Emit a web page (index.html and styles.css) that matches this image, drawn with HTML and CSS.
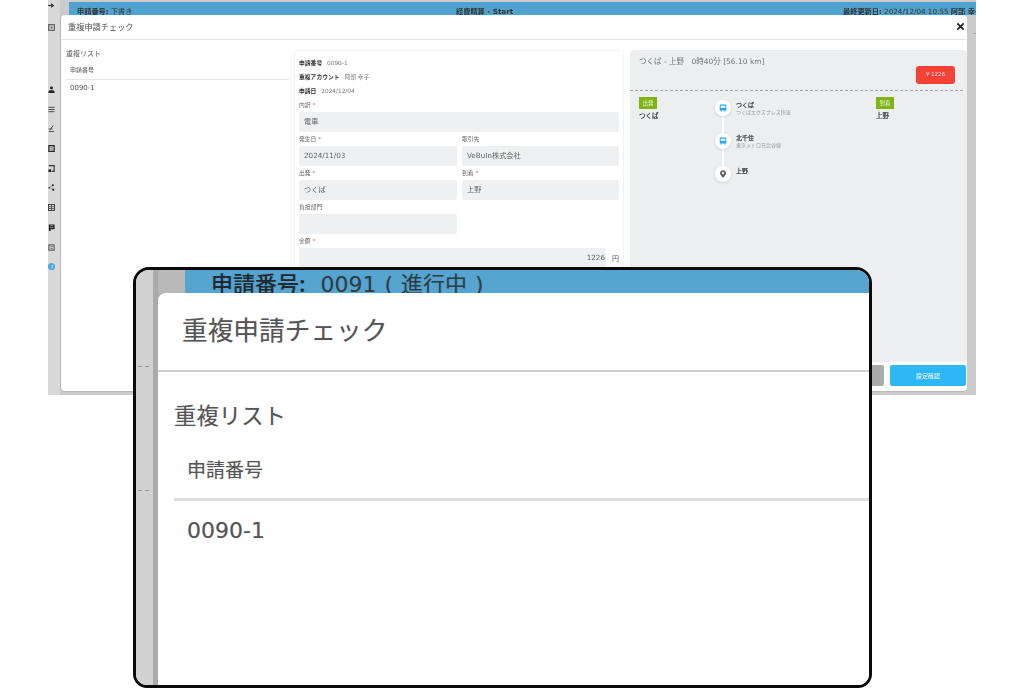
FILE: index.html
```html
<!DOCTYPE html>
<html lang="ja">
<head>
  <meta charset="UTF-8">
  <title>重複申請チェック</title>
  <link rel="stylesheet" href="styles.css">
</head>
<body>
  <div class="app">
    <nav class="rail">
      <div class="rail-top">
        <svg class="rail-icon" viewBox="0 0 8 8"><path d="M0 4h5M3.500 2l2.500 2-2.500 2" fill="none" stroke="#333" stroke-width="1.400"/></svg>
        <svg class="rail-icon" viewBox="0 0 8 8"><rect x="0.800" y="0.800" width="6.400" height="6.400" fill="none" stroke="#555" stroke-width="1.300"/><path d="M3 3h2v2H3z" fill="#555"/></svg>
      </div>
      <div class="rail-list">
        <svg class="rail-icon" viewBox="0 0 8 8"><circle cx="4" cy="2.200" r="1.700" fill="#222"/><path d="M0.500 8V6.500C0.500 5.200 2 4.800 4 4.800S7.500 5.200 7.500 6.500V8z" fill="#222"/></svg>
        <svg class="rail-icon" viewBox="0 0 8 8"><path d="M0.500 1.500h7M0.500 4h7M0.500 6.500h7" stroke="#444" stroke-width="1.100"/></svg>
        <svg class="rail-icon" viewBox="0 0 8 8"><path d="M6 0.500L2 6M1 7.500h6M1 4.500h4" fill="none" stroke="#444" stroke-width="1.100"/></svg>
        <svg class="rail-icon" viewBox="0 0 8 8"><rect x="1" y="0.700" width="6" height="6.600" fill="none" stroke="#222" stroke-width="1.400"/><path d="M2.500 3h3M2.500 5h3" stroke="#555" stroke-width="0.800"/></svg>
        <svg class="rail-icon" viewBox="0 0 8 8"><path d="M1 0.700h6v6.600H4" fill="none" stroke="#333" stroke-width="1.300"/><path d="M0.500 5h3v3h-3z" fill="#222"/></svg>
        <svg class="rail-icon" viewBox="0 0 8 8"><circle cx="5.500" cy="1.500" r="1.200" fill="#222"/><circle cx="1.500" cy="4" r="1" fill="#333"/><circle cx="6" cy="6.500" r="1.300" fill="#222"/><path d="M1.500 4L5.500 1.500M1.500 4L6 6.500" stroke="#555" stroke-width="0.500"/></svg>
        <svg class="rail-icon" viewBox="0 0 8 8"><rect x="0.600" y="0.600" width="6.800" height="6.800" fill="none" stroke="#333" stroke-width="1"/><path d="M0.600 3h6.800M0.600 5.300h6.800M4 0.600v6.800" stroke="#333" stroke-width="0.800"/></svg>
        <svg class="rail-icon" viewBox="0 0 8 8"><path d="M1 0.500h6.500v5.500H3v2H1z" fill="#222"/><path d="M2.500 2h3.500M2.500 4h3.500" stroke="#ccc" stroke-width="0.700"/></svg>
        <svg class="rail-icon" viewBox="0 0 8 8"><rect x="1" y="1" width="6" height="6" fill="none" stroke="#444" stroke-width="1.100"/><path d="M2.500 3h3M2.500 5h3" stroke="#555" stroke-width="0.800"/></svg>
        <svg class="rail-icon" viewBox="0 0 8 8"><circle cx="4" cy="4" r="4" fill="#4aa8dc"/><path d="M3.500 2.500h1.500v3H3.500" fill="none" stroke="#cfe6f3" stroke-width="0.800"/></svg>
      </div>
    </nav>

    <div class="behind">
      <div class="topbar">
        <span class="topbar-left"><b>申請番号:</b> 下書き</span>
        <span class="topbar-title">経費精算 - Start</span>
        <span class="topbar-right"><b>最終更新日:</b> 2024/12/04 10:55 <b>阿部 幸子</b></span>
      </div>
      <div class="behind-side">
        <i class="behind-tick"></i>
        <i class="behind-chip"></i>
        <i class="behind-blue"></i>
        <i class="behind-mark"></i>
        <i class="behind-mark"></i>
        <i class="behind-mark"></i>
        <i class="behind-mark"></i>
        <i class="behind-mark"></i>
      </div>
    </div>

    <section class="modal">
      <header class="modal-head">
        <h2>重複申請チェック</h2>
        <svg class="close" viewBox="0 0 10 10"><path d="M1.500 1.500l7 7M8.500 1.500l-7 7" stroke="#222" stroke-width="1.800"/></svg>
      </header>

      <div class="modal-body">
        <div class="dup-list">
          <h3>重複リスト</h3>
          <div class="dup-th">申請番号</div>
          <div class="dup-td">0090-1</div>
        </div>

        <div class="detail">
          <p class="info"><b>申請番号</b> 0090-1</p>
          <p class="info"><b>重複アカウント</b> 阿部 幸子</p>
          <p class="info"><b>申請日</b> 2024/12/04</p>

          <div class="form-grid">
            <div class="field wide"><label>内訳 <em>*</em></label><div class="value">電車</div></div>
            <div class="field"><label>発生日 <em>*</em></label><div class="value">2024/11/03</div></div>
            <div class="field"><label>取引先</label><div class="value">VeBuIn株式会社</div></div>
            <div class="field"><label>出発 <em>*</em></label><div class="value">つくば</div></div>
            <div class="field"><label>到着 <em>*</em></label><div class="value">上野</div></div>
            <div class="field"><label>負担部門</label><div class="value"></div></div>
            <div class="field-gap"></div>
            <div class="field wide">
              <label>金額 <em>*</em></label>
              <div class="amount"><div class="value">1226</div><span>円</span></div>
            </div>
          </div>
        </div>

        <div class="route">
          <div class="route-head">
            <div class="route-title">つくば - 上野　0時40分 [56.10 km]</div>
            <div class="fare">¥ 1226</div>
          </div>
          <div class="route-body">
            <div class="endpoint">
              <span class="tag">出発</span>
              <strong>つくば</strong>
            </div>
            <div class="stops">
              <div class="stop">
                <span class="stop-dot">
                  <svg viewBox="0 0 8 8"><path d="M1.500 0.500h5A0.800 0.800 0 0 1 7.300 1.300V6.500H0.700V1.300A0.800 0.800 0 0 1 1.500 0.500z" fill="#29a9e8"/><path d="M1.700 1.800h4.600v2H1.700z" fill="#fff"/><path d="M1.500 6.500h1.200V7.600H1.500zM5.300 6.500h1.200V7.600H5.300z" fill="#29a9e8"/></svg>
                </span>
                <div><strong>つくば</strong><small>つくばエクスプレス快速</small></div>
              </div>
              <div class="stop">
                <span class="stop-dot">
                  <svg viewBox="0 0 8 8"><path d="M1.500 0.500h5A0.800 0.800 0 0 1 7.300 1.300V6.500H0.700V1.300A0.800 0.800 0 0 1 1.500 0.500z" fill="#29a9e8"/><path d="M1.700 1.800h4.600v2H1.700z" fill="#fff"/><path d="M1.500 6.500h1.200V7.600H1.500zM5.300 6.500h1.200V7.600H5.300z" fill="#29a9e8"/></svg>
                </span>
                <div><strong>北千住</strong><small>東京メトロ日比谷線</small></div>
              </div>
              <div class="stop">
                <span class="stop-dot">
                  <svg viewBox="0 0 8 8"><path d="M4 0.300C2.200 0.300 1 1.600 1 3.200 1 5 4 7.800 4 7.800S7 5 7 3.200C7 1.600 5.800 0.300 4 0.300z" fill="#666"/><circle cx="4" cy="3.100" r="1.100" fill="#fff"/></svg>
                </span>
                <div><strong>上野</strong></div>
              </div>
            </div>
            <div class="endpoint">
              <span class="tag">到着</span>
              <strong>上野</strong>
            </div>
          </div>
        </div>
      </div>

      <footer class="modal-foot">
        <button class="btn btn-gray">閉じる</button>
        <button class="btn btn-blue">設定確認</button>
      </footer>
    </section>
  </div>

  <!-- enlarged view of the dialog corner -->
  <aside class="callout">
    <div class="call-rail">
      <i></i>
      <i></i>
    </div>
    <div class="call-main">
      <div class="call-bar"><b>申請番号:</b><span class="call-no">0091 ( 進行中 )</span></div>
      <div class="call-modal">
        <h2 class="call-title">重複申請チェック</h2>
        <div class="call-body">
          <h3>重複リスト</h3>
          <div class="call-th">申請番号</div>
          <div class="call-td">0090-1</div>
        </div>
      </div>
    </div>
  </aside>
</body>
</html>
```

FILE: styles.css
```css
* {
  box-sizing: border-box;
}
html, body {
  margin: 0;
  height: 689px;
  overflow: hidden;
  background: #fff;
  font-family: "DejaVu Sans", "Noto Sans CJK JP", sans-serif;
  color: #555;
}
h2, h3, p {
  margin: 0;
  font-weight: normal;
}

/* app behind the dialog */
.app {
  position: relative;
  display: flex;
  width: 928px;
  height: 395px;
  margin-left: 48px;
  background: #cbcbcb;
  overflow: hidden;
  filter: blur(0.55px);
}
.rail {
  width: 12px;
  flex: none;
  background: #d8d8d8;
}
.rail-top {
  display: flex;
  flex-direction: column;
  gap: 15px;
  padding-top: 2px;
}
.rail-list {
  display: flex;
  flex-direction: column;
  gap: 12.700px;
  padding-top: 55px;
}
.rail-icon {
  display: block;
  width: 7px;
  height: 7px;
}
.behind {
  flex: 1;
  padding-top: 2px;
  display: flex;
  flex-direction: column;
}
.topbar {
  display: flex;
  height: 13px;
  margin-left: 9px;
  padding-left: 8px;
  background: #50a3cf;
  color: #333;
  font-size: 7.200px;
  line-height: 19px;
  white-space: nowrap;
  overflow: hidden;
}
.topbar-left {
  width: 55px;
  flex: none;
}
.topbar-title {
  width: 63px;
  flex: none;
  margin-left: 324px;
  font-weight: bold;
}
.topbar-right {
  margin-left: 324px;
}
.behind-side {
  display: flex;
  flex-direction: column;
  align-items: flex-end;
}
.behind-tick {
  width: 9px;
  height: 1px;
  margin-top: 18px;
  background: #aaa;
}
.behind-chip {
  width: 4px;
  height: 10px;
  margin-top: 56px;
  background: #b4b4b4;
}
.behind-blue {
  width: 4px;
  height: 19px;
  margin-top: 22px;
  margin-bottom: 5px;
  background: #50a3cf;
}
.behind-mark {
  width: 3px;
  height: 5px;
  margin-top: 12px;
  background: #8f8f8f;
}

/* dialog */
.modal {
  position: absolute;
  left: 13px;
  top: 15px;
  width: 906px;
  height: 376px;
  display: flex;
  flex-direction: column;
  background: #fff;
  border-radius: 4px;
  box-shadow: -1px 0 0 #b8b8b8, 0 1px 0 #b8b8b8;
}
.modal-head {
  display: flex;
  align-items: center;
  justify-content: space-between;
  flex: none;
  height: 25px;
  padding: 0 2px 2px 7px;
  border-bottom: 1px solid #e4e4e4;
}
.modal-head h2 {
  font-size: 8.200px;
  color: #555;
}
.close {
  width: 9px;
  height: 9px;
}
.modal-body {
  display: flex;
  flex: 1;
  min-height: 0;
  padding: 10px 0 0 5px;
}
.dup-list {
  width: 223px;
  flex: none;
  margin-right: 5px;
}
.dup-list h3 {
  font-size: 7px;
  line-height: 8px;
}
.dup-th {
  height: 22px;
  padding: 9px 0 0 4px;
  border-bottom: 1px solid #e6e6e6;
  font-size: 6px;
  line-height: 6px;
}
.dup-td {
  padding: 4px 4px;
  font-size: 7px;
  line-height: 9px;
}
.detail {
  width: 330px;
  flex: none;
  padding: 5px 4px 0 4px;
  border: 1px solid #f3f3f3;
  border-radius: 3px;
  overflow: hidden;
}
.info {
  height: 14px;
  line-height: 14px;
  color: #777;
  white-space: nowrap;
  font-size: 5.800px;
}
.info b {
  color: #333;
  margin-right: 3px;
}
.form-grid {
  display: grid;
  grid-template-columns: 158px 157px;
  column-gap: 5px;
}
.wide {
  grid-column: 1 / 3;
}
.field {
  height: 34px;
}
.field label {
  display: block;
  height: 14px;
  line-height: 14px;
  font-size: 5.800px;
  color: #666;
}
.field em {
  color: #e5484d;
  font-style: normal;
}
.value {
  height: 20px;
  padding: 0 5px;
  background: #eff0f1;
  border-radius: 2px;
  color: #666;
  font-size: 7.200px;
  line-height: 20px;
}
.amount {
  display: flex;
  align-items: center;
}
.amount .value {
  flex: 1;
  text-align: right;
  padding-right: 1px;
}
.amount span {
  width: 13px;
  text-align: right;
  font-size: 7px;
}
.route {
  width: 337px;
  flex: none;
  margin-left: 6px;
  background: #eceef0;
  border-radius: 4px 4px 0 0;
}
.route-head {
  height: 41px;
  padding: 7px 8px 0 9px;
  margin-right: 4px;
  border-bottom: 1px dashed #a6a6a6;
}
.route-title {
  font-size: 7.500px;
  line-height: 9px;
  color: #777;
  white-space: nowrap;
}
.fare {
  width: 39px;
  height: 18px;
  margin-left: auto;
  background: #f44336;
  border-radius: 3px;
  color: #fde;
  font-size: 5.500px;
  line-height: 16px;
  text-align: center;
}
.route-body {
  display: grid;
  grid-template-columns: 76px 161px 1fr;
  padding: 6px 9px 0;
}
.endpoint strong {
  display: block;
  margin-top: 2px;
  font-size: 6.500px;
  line-height: 10px;
  font-weight: normal;
  -webkit-text-stroke: 0.200px #333;
  color: #333;
}
.tag {
  display: block;
  width: 18px;
  height: 12px;
  background: #7fb414;
  color: #e8f3cf;
  font-size: 5.500px;
  line-height: 12px;
  text-align: center;
}
.stop {
  position: relative;
  display: flex;
  gap: 5px;
  height: 33px;
  padding-top: 3px;
}
.stop:not(:last-child)::after {
  content: "";
  position: absolute;
  left: 7px;
  top: 14px;
  width: 2px;
  height: 33px;
  background: #fff;
}
.stop-dot {
  position: relative;
  z-index: 1;
  display: flex;
  align-items: center;
  justify-content: center;
  width: 16px;
  height: 16px;
  flex: none;
  background: #fff;
  border-radius: 50%;
  box-shadow: 0 1px 3px rgba(0,0,0,0.12);
}
.stop-dot svg {
  width: 8px;
  height: 8px;
}
.stop strong {
  display: block;
  font-size: 6px;
  line-height: 9px;
  font-weight: normal;
  color: #333;
  -webkit-text-stroke: 0.200px #333;
}
.stop small {
  display: block;
  font-size: 5px;
  line-height: 7px;
  color: #999;
  white-space: nowrap;
}
.modal-foot {
  display: flex;
  justify-content: flex-end;
  gap: 6px;
  flex: none;
  height: 29px;
  padding: 3px 1px 0 0;
}
.btn {
  height: 21px;
  border: 0;
  border-radius: 2px;
  padding: 0;
  color: #fff;
  font-family: inherit;
  font-size: 6px;
}
.btn-gray {
  width: 76px;
  background: #ababab;
}
.btn-blue {
  width: 76px;
  background: #2db7f7;
}

/* enlarged corner, sits on top of the page */
.callout {
  position: absolute;
  left: 133px;
  top: 267px;
  width: 739px;
  height: 421px;
  display: flex;
  background: #fff;
  border: 3px solid #0a0a0a;
  border-radius: 16px 16px 14px 14px;
  overflow: hidden;
}
.call-rail {
  width: 22px;
  flex: none;
  display: flex;
  flex-direction: column;
  background: #d2d2d2;
  border-right: 5px solid #ababab;
}
.call-rail i {
  width: 12px;
  height: 1px;
  margin-left: 2px;
  background: repeating-linear-gradient(90deg, #999 0 4px, transparent 4px 7px);
}
.call-rail i:first-child {
  margin-top: 96px;
}
.call-rail i:last-child {
  margin-top: 123px;
}
.call-main {
  flex: 1;
  display: flex;
  flex-direction: column;
  background: #b2b2b2;
}
.call-bar {
  flex: none;
  height: 23px;
  padding-left: 26px;
  border-left: 27px solid #b9b9b9;
  background: #55a5d0;
  color: #2c3e4a;
  font-size: 22px;
  line-height: 24px;
  white-space: nowrap;
  overflow: hidden;
}
.call-bar b {
  color: #1d2a33;
  font-weight: 500;
  font-family: "Noto Sans CJK JP", sans-serif;
}
.call-no {
  margin-left: 15px;
  word-spacing: 1px;
}
.call-modal {
  flex: 1;
  background: #fff;
  border-top-left-radius: 8px;
  color: #555;
}
.call-title {
  height: 79px;
  padding-left: 24px;
  border-bottom: 2px solid #cfcfcf;
  font-size: 25.700px;
  line-height: 77px;
}
.call-body {
  padding-left: 16px;
}
.call-body h3 {
  margin-top: 26px;
  font-size: 22.400px;
  line-height: 36px;
}
.call-th {
  height: 67px;
  padding: 22px 0 0 13px;
  border-bottom: 3px solid #dedede;
  font-size: 19px;
  line-height: 28px;
}
.call-td {
  padding: 14px 0 0 13px;
  font-size: 22px;
  line-height: 32px;
}
.call-bar, .call-title, .call-body h3, .call-th, .call-td {
  text-shadow: 0 0 1px rgba(85,85,85,0.35);
}
```
